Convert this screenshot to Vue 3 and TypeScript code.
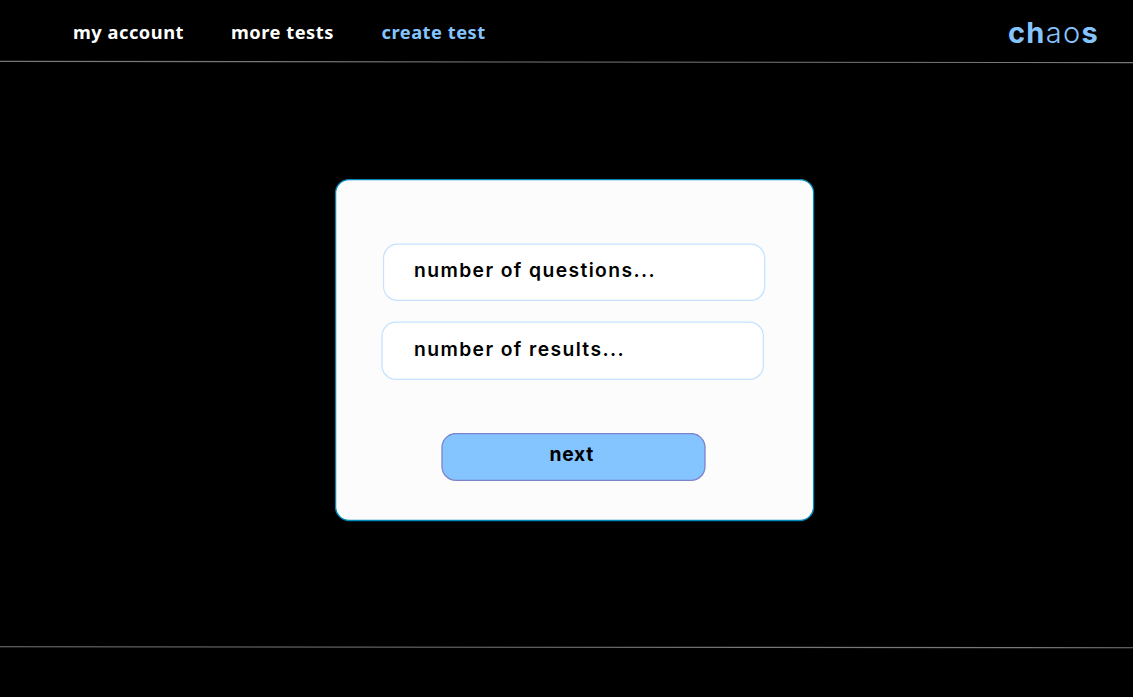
<script setup lang="ts">
import { ref } from 'vue'

interface NavItem {
  label: string
  cls: string
}

const active = ref('create test')
const nav: NavItem[] = [
  { label: 'my account', cls: 'account' },
  { label: 'more tests', cls: 'more' },
  { label: 'create test', cls: 'create' },
]
</script>

<template>
  <div class="page">
    <header class="header">
      <nav class="nav">
        <a
          v-for="item in nav"
          :key="item.label"
          :class="['link', item.cls, { active: item.label === active }]"
          @click="active = item.label"
        >{{ item.label }}</a>
      </nav>
      <div class="logo"><b>ch</b><span>ao</span><b>s</b></div>
    </header>
    <svg class="rule" width="1133" height="4" viewBox="0 0 1133 4">
      <line x1="0" y1="1.4" x2="1133" y2="2.6" />
    </svg>
    <main class="main">
      <form class="card panel" @submit.prevent>
        <svg class="frame" width="480" height="343">
          <rect x="0.6" y="0.6" width="478" height="340.9" rx="13.5" />
        </svg>
        <div class="fields">
          <div class="field questions panel">
            <svg class="frame" width="384" height="58">
              <rect x="0.5" y="1.1" width="381.2" height="56.3" rx="14" />
            </svg>
            <span>number of questions...</span>
          </div>
          <div class="field results panel">
            <svg class="frame" width="384" height="60">
              <rect x="1" y="1.1" width="381.4" height="57.3" rx="14" />
            </svg>
            <span>number of results...</span>
          </div>
          <button class="next panel" type="button">
            <svg class="frame" width="266" height="49">
              <rect x="1" y="0.5" width="263" height="46.9" rx="14" />
            </svg>
            <span>next</span>
          </button>
        </div>
      </form>
    </main>
    <svg class="rule" width="1133" height="4" viewBox="0 0 1133 4">
      <line x1="0" y1="1.8" x2="1133" y2="2.7" />
    </svg>
  </div>
</template>

<style>
body {
  background: #000;
}
</style>

<style scoped>
.page {
  width: 1133px;
  height: 697px;
  overflow: hidden;
  background: #000;
  display: flex;
  flex-direction: column;
  font-family: Inter, "Liberation Sans", sans-serif;
}
.page * {
  box-sizing: border-box;
}
.header {
  height: 60px;
  flex: none;
  display: flex;
  justify-content: space-between;
  padding: 18px 34px 0 73px;
}
.nav {
  display: flex;
}
.link {
  font: 700 18.3px/28px "Noto Sans", sans-serif;
  letter-spacing: 0.5px;
  color: #fff;
  white-space: nowrap;
  cursor: pointer;
}
.account {
  width: 158px;
}
.more {
  width: 150.5px;
}
.active {
  color: #85c5ff;
}
.logo {
  font-size: 29px;
  line-height: 30px;
  letter-spacing: 1.3px;
  color: #85c5ff;
  white-space: nowrap;
}
.logo b {
  font-weight: 700;
}
.logo span {
  font-weight: 300;
}
.rule {
  display: block;
  flex: none;
}
.rule line {
  stroke: #777;
  stroke-width: 1.1;
}
.main {
  height: 581px;
  flex: none;
  padding: 115px 0 0 335px;
}
.panel {
  display: grid;
  align-items: start;
  justify-items: start;
}
.panel > * {
  grid-area: 1 / 1;
}
.frame {
  display: block;
  stroke-width: 1.3;
}
.card {
  width: 480px;
  height: 343px;
}
.card > .frame {
  fill: #fcfcfc;
  stroke: #0088bb;
}
.fields {
  padding: 64px 0 0 46px;
  display: flex;
  flex-direction: column;
}
.field {
  width: 384px;
  font-size: 19.3px;
  font-weight: 600;
  line-height: 24px;
  letter-spacing: 1.4px;
  color: #000;
  white-space: nowrap;
}
.field .frame {
  fill: #fff;
  stroke: #c5e3ff;
}
.field span,
.next span {
  position: relative;
}
.questions {
  height: 58px;
  margin-left: 2px;
}
.questions span {
  padding: 15px 0 0 31px;
}
.results {
  height: 60px;
  margin-top: 20px;
}
.results span {
  padding: 16px 0 0 33px;
}
.next {
  width: 266px;
  height: 49px;
  margin: 52px 0 0 60px;
  padding: 0;
  border: 0;
  background: none;
  color: #000;
  font-family: inherit;
  font-size: 19.3px;
  font-weight: 700;
  line-height: 24px;
  letter-spacing: 0.7px;
}
.next .frame {
  fill: #85c5ff;
  stroke: #7d83cb;
}
.next span {
  padding: 9px 0 0 108.5px;
}
</style>
